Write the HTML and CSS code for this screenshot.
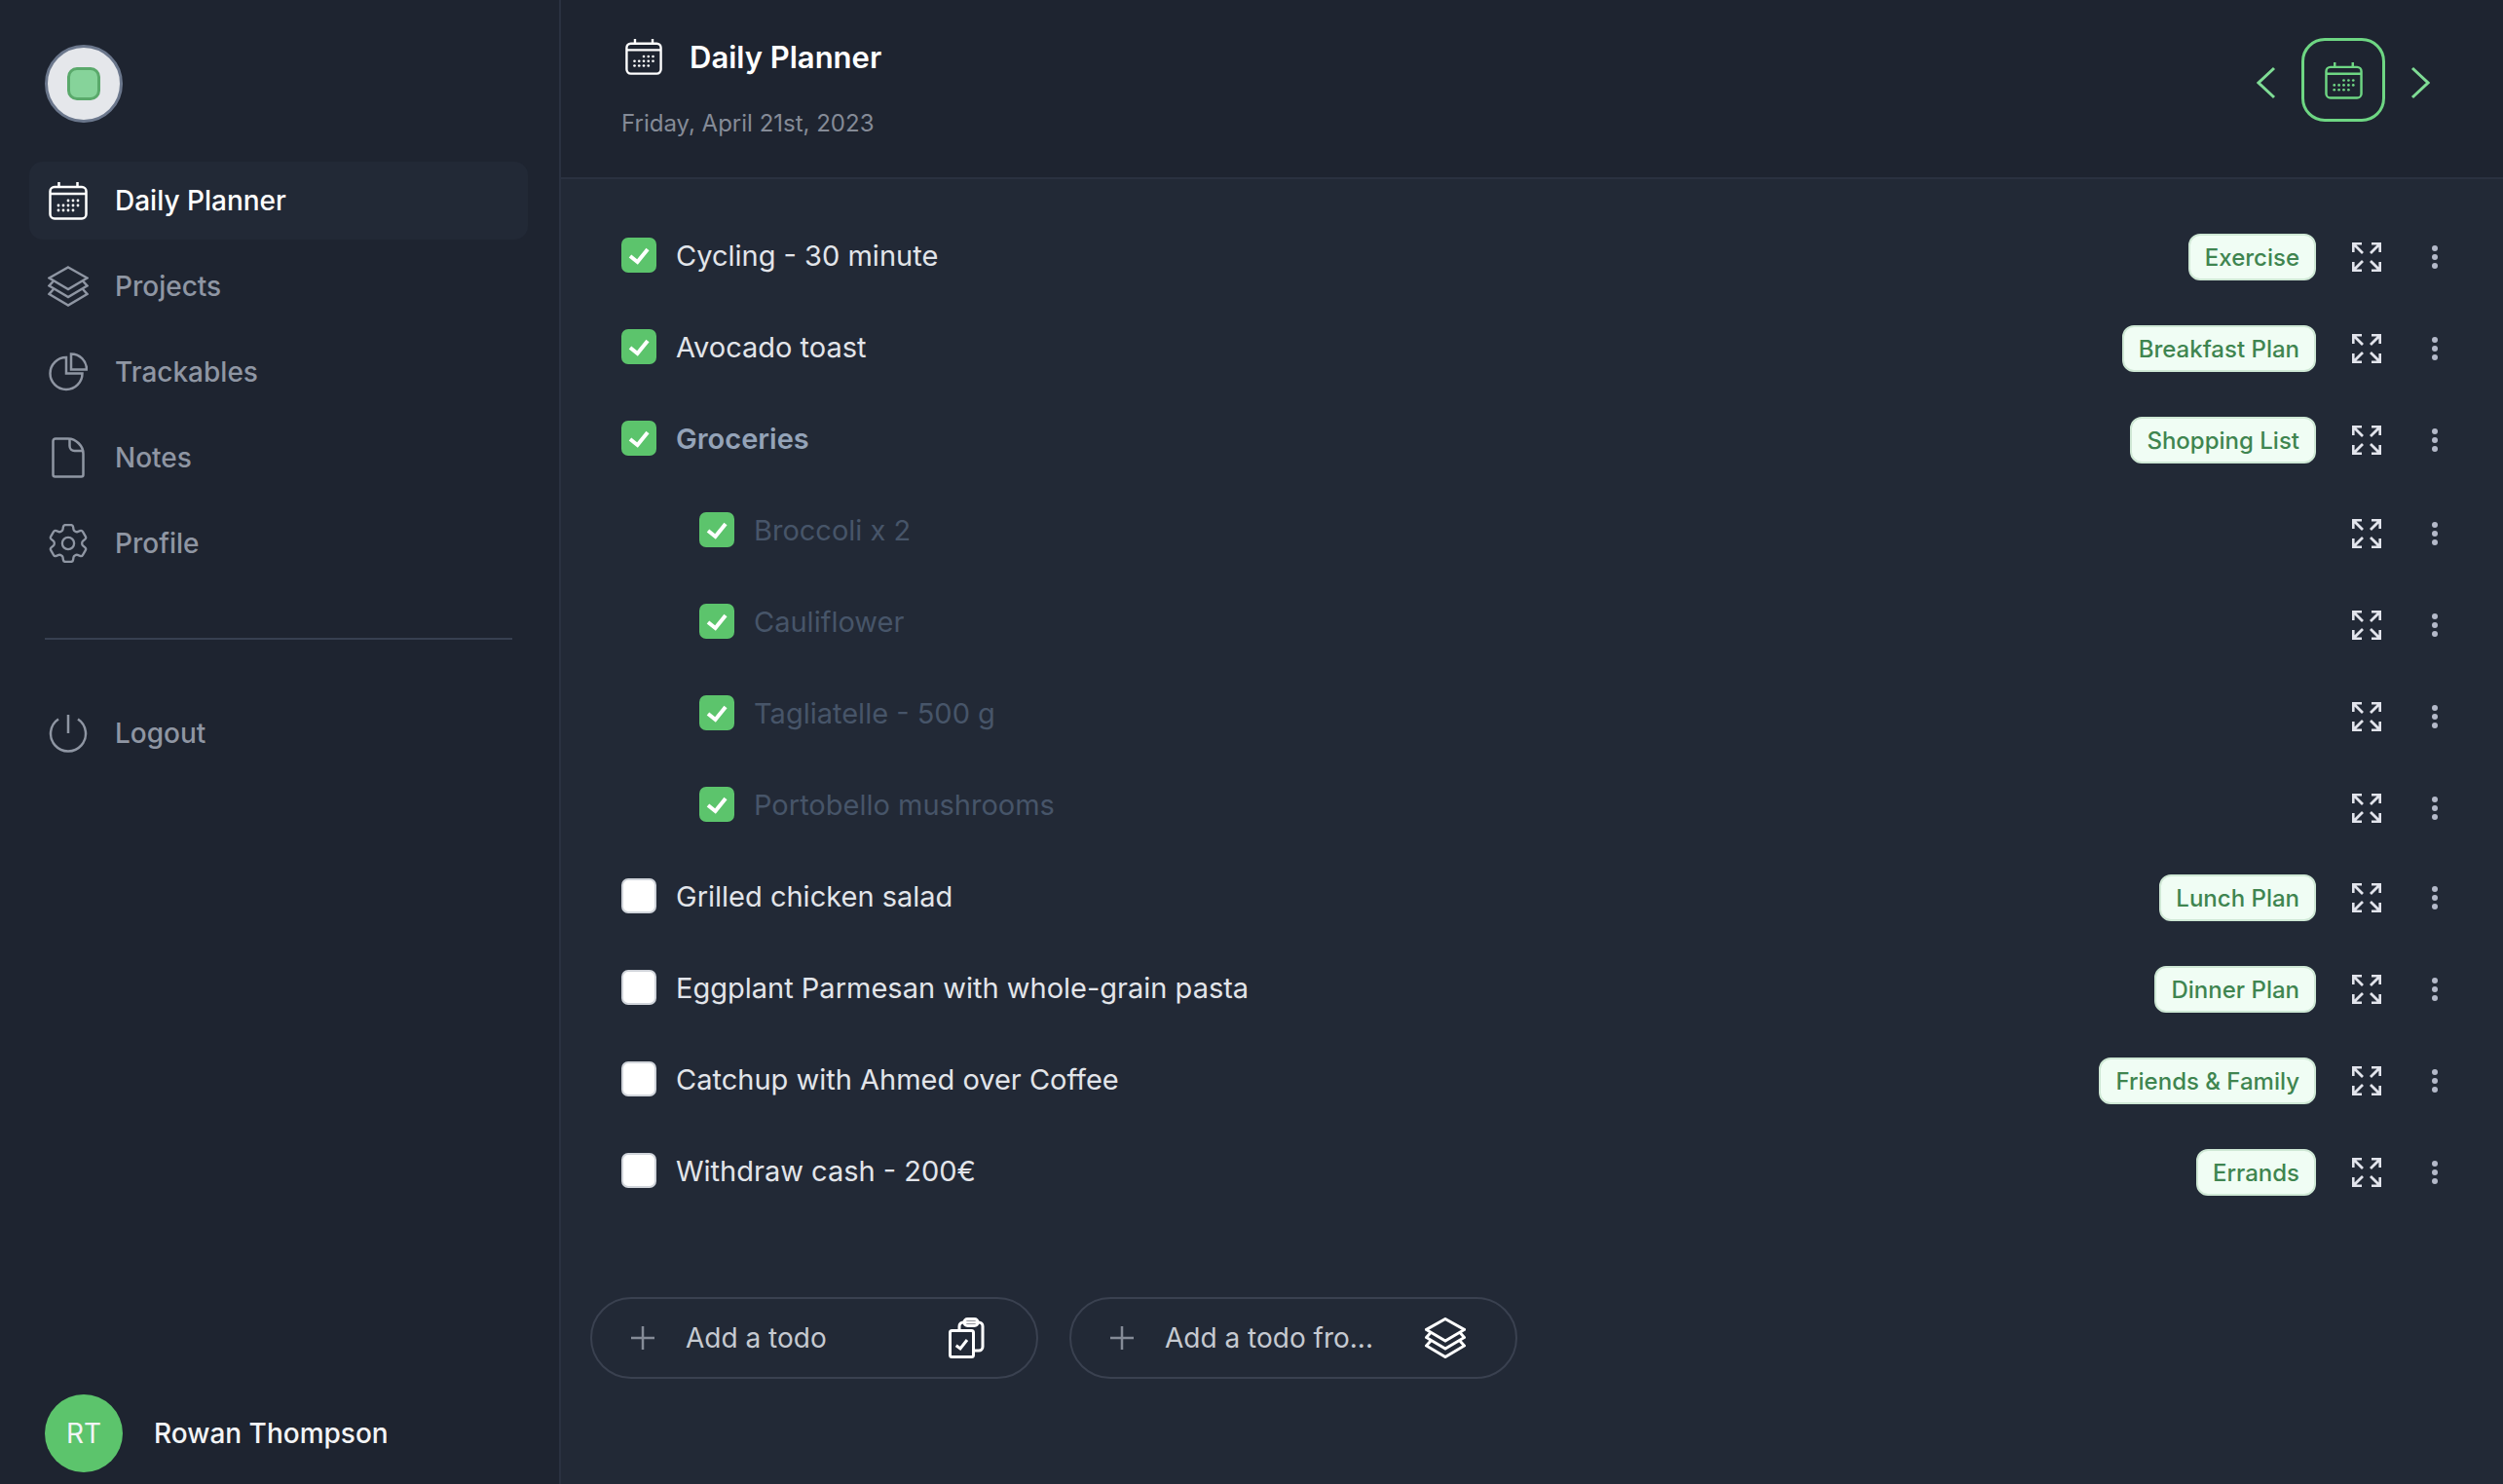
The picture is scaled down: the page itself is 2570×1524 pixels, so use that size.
FILE: index.html
```html
<!DOCTYPE html>
<html lang="en">
<head>
    <meta charset="UTF-8">
    <title>Daily Planner</title>
    <link rel="stylesheet" href="styles.css">
</head>
<body>
    <svg class="sprite" xmlns="http://www.w3.org/2000/svg">
        <symbol id="i-calendar" viewBox="0 0 40 40">
            <rect x="1.5" y="6" width="37" height="32.5" rx="4.5"/>
            <path d="M1.5 13H38.5M10.5 1V6M29.5 1V6"/>
            <g class="dots">
                <circle cx="20" cy="20" r="1.4"/><circle cx="25" cy="20" r="1.4"/><circle cx="30" cy="20" r="1.4"/>
                <circle cx="10" cy="25" r="1.4"/><circle cx="15" cy="25" r="1.4"/><circle cx="20" cy="25" r="1.4"/><circle cx="25" cy="25" r="1.4"/><circle cx="30" cy="25" r="1.4"/>
                <circle cx="10" cy="30" r="1.4"/><circle cx="15" cy="30" r="1.4"/><circle cx="20" cy="30" r="1.4"/><circle cx="25" cy="30" r="1.4"/>
            </g>
        </symbol>
        <symbol id="i-layers" viewBox="0 0 42 42">
            <path d="M21 1.5L40.5 12.5L21 24L1.5 12.5Z"/>
            <path d="M6 15.5L1.5 20.5L21 32L40.5 20.5L36 15.5"/>
            <path d="M6 24L1.5 29L21 40.5L40.5 29L36 24"/>
        </symbol>
        <symbol id="i-pie" viewBox="0 0 40 40">
            <path d="M18 5A16.5 16.5 0 1 0 34.5 21.5H18Z"/>
            <path d="M23 1.5A16 16 0 0 1 39 17.5H23Z"/>
        </symbol>
        <symbol id="i-doc" viewBox="0 0 34 42">
            <path d="M4 1.500H17C25 1.500 32.500 9 32.500 17V38.500A2 2 0 0 1 30.500 40.500H3.500A2 2 0 0 1 1.500 38.500V4A2.500 2.500 0 0 1 4 1.500Z"/>
            <path d="M18.500 2V9A5 5 0 0 0 23.500 14H32"/>
        </symbol>
        <symbol id="i-gear" viewBox="2.500 2.500 19 19">
            <path stroke-width="1.100" d="M9.594 3.94c.09-.542.56-.94 1.11-.94h2.593c.55 0 1.02.398 1.11.94l.213 1.281c.063.374.313.686.645.87.074.04.147.083.22.127.324.196.72.257 1.075.124l1.217-.456a1.125 1.125 0 011.37.49l1.296 2.247a1.125 1.125 0 01-.26 1.431l-1.003.827c-.293.24-.438.613-.431.992a6.759 6.759 0 010 .255c-.007.378.138.75.43.99l1.005.828c.424.35.534.954.26 1.43l-1.298 2.247a1.125 1.125 0 01-1.369.491l-1.217-.456c-.355-.133-.75-.072-1.076.124a6.57 6.57 0 01-.22.128c-.331.183-.581.495-.644.869l-.213 1.28c-.09.543-.56.941-1.11.941h-2.594c-.55 0-1.02-.398-1.11-.94l-.213-1.281c-.062-.374-.312-.686-.644-.87a6.52 6.52 0 01-.22-.127c-.325-.196-.72-.257-1.076-.124l-1.217.456a1.125 1.125 0 01-1.369-.49l-1.297-2.247a1.125 1.125 0 01.26-1.431l1.004-.827c.292-.24.437-.613.43-.992a6.932 6.932 0 010-.255c.007-.378-.138-.75-.43-.99l-1.004-.828a1.125 1.125 0 01-.26-1.43l1.297-2.247a1.125 1.125 0 011.37-.491l1.216.456c.356.133.751.072 1.076-.124.072-.044.146-.087.22-.128.332-.183.582-.495.644-.869l.214-1.281z"/>
            <circle stroke-width="1.100" cx="12" cy="12" r="2.900"/>
        </symbol>
        <symbol id="i-power" viewBox="0 0 40 40">
            <path d="M20 1V20M10 5.500A18 18 0 1 0 30 5.500"/>
        </symbol>
        <symbol id="i-expand" viewBox="0 0 30 30">
            <path d="M1.200 10V1.200H10M1.200 1.200L11 11"/>
            <path d="M20 1.200H28.800V10M28.800 1.200L19 11"/>
            <path d="M1.200 20V28.800H10M1.200 28.800L11 19"/>
            <path d="M20 28.800H28.800V20M28.800 28.800L19 19"/>
        </symbol>
        <symbol id="i-more" viewBox="0 0 6 24">
            <circle cx="3" cy="3" r="3"/><circle cx="3" cy="12" r="3"/><circle cx="3" cy="21" r="3"/>
        </symbol>
        <symbol id="i-check" viewBox="0 0 36 36">
            <path d="M9 19L16.500 25L27 12"/>
        </symbol>
        <symbol id="i-clipboards" viewBox="0 0 42 42">
            <rect x="4.500" y="13.500" width="24" height="27" rx="2"/>
            <path d="M14 13V9A4 4 0 0 1 18 5H34A4 4 0 0 1 38 9V30A4 4 0 0 1 34 34H29"/>
            <rect x="19" y="1.500" width="14" height="7" rx="3.500"/>
            <path d="M10.700 28.700L15 32L22 23"/>
        </symbol>
    </svg>

    <div class="app">
        <aside class="sidebar">
            <div class="logo"><span class="logo-mark"></span></div>

            <nav class="nav">
                <a class="nav-item active"><svg class="nav-icon"><use href="#i-calendar"/></svg>Daily Planner</a>
                <a class="nav-item"><svg class="nav-icon layers"><use href="#i-layers"/></svg>Projects</a>
                <a class="nav-item"><svg class="nav-icon"><use href="#i-pie"/></svg>Trackables</a>
                <a class="nav-item"><svg class="nav-icon doc"><use href="#i-doc"/></svg>Notes</a>
                <a class="nav-item"><svg class="nav-icon"><use href="#i-gear"/></svg>Profile</a>
            </nav>

            <hr class="nav-divider">

            <a class="nav-item"><svg class="nav-icon"><use href="#i-power"/></svg>Logout</a>

            <div class="user">
                <span class="avatar">RT</span>
                <span class="user-name">Rowan Thompson</span>
            </div>
        </aside>

        <main class="main">
            <header class="header">
                <div class="header-text">
                    <h1 class="title"><svg class="title-icon"><use href="#i-calendar"/></svg><span class="title-text">Daily Planner</span></h1>
                    <p class="date">Friday, April 21st, 2023</p>
                </div>
                <div class="date-nav">
                    <svg class="chevron" viewBox="0 0 20 34"><path d="M18 2L2 17L18 32"/></svg>
                    <button class="today"><svg class="today-icon"><use href="#i-calendar"/></svg></button>
                    <svg class="chevron" viewBox="0 0 20 34"><path d="M2 2L18 17L2 32"/></svg>
                </div>
            </header>

            <ul class="todos">
                <li class="todo">
                    <span class="box checked"><svg><use href="#i-check"/></svg></span>
                    <span class="todo-text">Cycling - 30 minute</span>
                    <span class="tag">Exercise</span>
                    <svg class="expand"><use href="#i-expand"/></svg>
                    <svg class="more"><use href="#i-more"/></svg>
                </li>
                <li class="todo">
                    <span class="box checked"><svg><use href="#i-check"/></svg></span>
                    <span class="todo-text">Avocado toast</span>
                    <span class="tag">Breakfast Plan</span>
                    <svg class="expand"><use href="#i-expand"/></svg>
                    <svg class="more"><use href="#i-more"/></svg>
                </li>
                <li class="todo parent">
                    <span class="box checked"><svg><use href="#i-check"/></svg></span>
                    <span class="todo-text">Groceries</span>
                    <span class="tag">Shopping List</span>
                    <svg class="expand"><use href="#i-expand"/></svg>
                    <svg class="more"><use href="#i-more"/></svg>
                </li>
                <li class="todo sub">
                    <span class="box checked"><svg><use href="#i-check"/></svg></span>
                    <span class="todo-text">Broccoli x 2</span>
                    <svg class="expand"><use href="#i-expand"/></svg>
                    <svg class="more"><use href="#i-more"/></svg>
                </li>
                <li class="todo sub">
                    <span class="box checked"><svg><use href="#i-check"/></svg></span>
                    <span class="todo-text">Cauliflower</span>
                    <svg class="expand"><use href="#i-expand"/></svg>
                    <svg class="more"><use href="#i-more"/></svg>
                </li>
                <li class="todo sub">
                    <span class="box checked"><svg><use href="#i-check"/></svg></span>
                    <span class="todo-text">Tagliatelle - 500 g</span>
                    <svg class="expand"><use href="#i-expand"/></svg>
                    <svg class="more"><use href="#i-more"/></svg>
                </li>
                <li class="todo sub">
                    <span class="box checked"><svg><use href="#i-check"/></svg></span>
                    <span class="todo-text">Portobello mushrooms</span>
                    <svg class="expand"><use href="#i-expand"/></svg>
                    <svg class="more"><use href="#i-more"/></svg>
                </li>
                <li class="todo">
                    <span class="box"></span>
                    <span class="todo-text">Grilled chicken salad</span>
                    <span class="tag">Lunch Plan</span>
                    <svg class="expand"><use href="#i-expand"/></svg>
                    <svg class="more"><use href="#i-more"/></svg>
                </li>
                <li class="todo">
                    <span class="box"></span>
                    <span class="todo-text">Eggplant Parmesan with whole-grain pasta</span>
                    <span class="tag">Dinner Plan</span>
                    <svg class="expand"><use href="#i-expand"/></svg>
                    <svg class="more"><use href="#i-more"/></svg>
                </li>
                <li class="todo">
                    <span class="box"></span>
                    <span class="todo-text">Catchup with Ahmed over Coffee</span>
                    <span class="tag">Friends &amp; Family</span>
                    <svg class="expand"><use href="#i-expand"/></svg>
                    <svg class="more"><use href="#i-more"/></svg>
                </li>
                <li class="todo">
                    <span class="box"></span>
                    <span class="todo-text">Withdraw cash - 200€</span>
                    <span class="tag">Errands</span>
                    <svg class="expand"><use href="#i-expand"/></svg>
                    <svg class="more"><use href="#i-more"/></svg>
                </li>
            </ul>

            <div class="add-row">
                <button class="add-btn">
                    <svg class="plus" viewBox="0 0 24 24"><path d="M12 0V24M0 12H24"/></svg>
                    <span class="add-label">Add a todo</span>
                    <svg class="add-icon"><use href="#i-clipboards"/></svg>
                </button>
                <button class="add-btn">
                    <svg class="plus" viewBox="0 0 24 24"><path d="M12 0V24M0 12H24"/></svg>
                    <span class="add-label">Add a todo fro...</span>
                    <svg class="add-icon"><use href="#i-layers"/></svg>
                </button>
            </div>
        </main>
    </div>
</body>
</html>
```

FILE: styles.css
```css
* { box-sizing: border-box; }

html, body {
    margin: 0;
    height: 100%;
}

body {
    font-family: Inter, "Liberation Sans", sans-serif;
    background: #222936;
    color: #e5e7eb;
}

.sprite { display: none; }

svg {
    fill: none;
    stroke: currentColor;
    stroke-width: 2.5;
    flex: none;
}

.dots {
    fill: currentColor;
    stroke: none;
}

.app {
    display: flex;
    height: 1524px;
}

/* sidebar */
.sidebar {
    width: 576px;
    flex: none;
    display: flex;
    flex-direction: column;
    padding: 46px 32px 12px 30px;
    background: #1e2430;
    border-right: 2px solid #2a3140;
}

.logo {
    width: 80px;
    height: 80px;
    margin-left: 16px;
    margin-bottom: 40px;
    display: flex;
    align-items: center;
    justify-content: center;
    border-radius: 50%;
    background: #e5e7eb;
    border: 3px solid #6b778c;
}

.logo-mark {
    width: 34px;
    height: 34px;
    border-radius: 10px;
    background: #86d39a;
    border: 3px solid #5aa96b;
}

.nav {
    display: flex;
    flex-direction: column;
    gap: 8px;
}

.nav-item {
    height: 80px;
    display: flex;
    align-items: center;
    gap: 28px;
    padding-left: 20px;
    border-radius: 14px;
    color: #8f96a3;
    font-size: 28px;
    font-weight: 500;
}

.nav-item.active {
    background: #222936;
    color: #fff;
}

.nav-icon {
    width: 40px;
    height: 40px;
}

.nav-icon.layers {
    width: 42px;
    height: 42px;
    margin: 0 -1px;
}

.nav-icon.doc {
    width: 34px;
    height: 42px;
    margin: 0 3px;
}

.nav-divider {
    width: 480px;
    height: 2px;
    margin: 57px 0 56px 16px;
    border: 0;
    background: #374050;
}

.user {
    margin-top: auto;
    margin-left: 16px;
    display: flex;
    align-items: center;
    gap: 32px;
}

.avatar {
    width: 80px;
    height: 80px;
    display: flex;
    align-items: center;
    justify-content: center;
    border-radius: 50%;
    background: #5cc46c;
    color: #f3f4f6;
    font-size: 28px;
}

.user-name {
    color: #f3f4f6;
    font-size: 28px;
    font-weight: 500;
}

/* main column */
.main {
    flex: 1;
    min-width: 0;
    display: flex;
    flex-direction: column;
}

.header {
    height: 184px;
    flex: none;
    display: flex;
    justify-content: space-between;
    padding: 39px 75px 0 62px;
    background: #1e2430;
    border-bottom: 2px solid #2a3140;
}

.title {
    margin: 0;
    display: flex;
    align-items: center;
    gap: 28px;
    height: 38px;
    padding-left: 4px;
    color: #fff;
    font-size: 31px;
    font-weight: 600;
    line-height: 35px;
}

.title-text { padding-top: 1px; }

.title-icon {
    width: 38px;
    height: 38px;
}

.date {
    margin: 34px 0 0;
    color: #858b97;
    font-size: 24px;
    line-height: 32px;
}

.date-nav {
    display: flex;
    align-items: center;
    align-self: flex-start;
    gap: 26px;
    color: #7fdc95;
}

.chevron {
    width: 20px;
    height: 34px;
    margin-top: 6px;
    stroke-width: 3;
}

.today {
    width: 86px;
    height: 86px;
    padding: 0;
    display: flex;
    align-items: center;
    justify-content: center;
    background: none;
    border: 3px solid #6ed683;
    border-radius: 24px;
    color: #6ed683;
}

.today-icon {
    width: 39px;
    height: 39px;
}

/* todo list */
.todos {
    list-style: none;
    margin: 31px 0 0;
    padding: 0 67px 0 62px;
}

.todo {
    height: 94px;
    display: flex;
    align-items: center;
    font-size: 29px;
}

.todo.sub { padding-left: 80px; }

.box {
    width: 36px;
    height: 36px;
    flex: none;
    margin-right: 20px;
    border-radius: 7px;
    background: #fff;
    border: 2px solid #d1d5db;
}

.box.checked {
    background: #5cc46c;
    border: 0;
    color: #fff;
}

.box svg {
    display: block;
    width: 36px;
    height: 36px;
    stroke-width: 4;
}

.todo-text {
    flex: 1;
    color: #e2e5ea;
}

.parent .todo-text {
    color: #94a3b8;
    font-weight: 600;
}

.sub .todo-text { color: #475569; }

.tag {
    height: 48px;
    display: flex;
    align-items: center;
    margin-top: 4px;
    padding: 0 15px;
    background: #f0fdf4;
    border: 2px solid #cfe8d5;
    border-radius: 12px;
    color: #3f8550;
    font-size: 24px;
    font-weight: 500;
}

.expand {
    width: 30px;
    height: 30px;
    margin: 4px 52px 0 37px;
    color: #e2e4ec;
    stroke-width: 2.800;
}

.sub .expand { margin-top: 7px; }

.more {
    width: 6px;
    height: 24px;
    margin-top: 4px;
    fill: #b4b9c9;
    stroke: none;
}

.sub .more { margin-top: 7px; }

/* add buttons */
.add-row {
    display: flex;
    gap: 32px;
    margin: 83px 0 0 30px;
}

.add-btn {
    width: 460px;
    height: 84px;
    display: flex;
    align-items: center;
    padding: 0 51px 0 40px;
    background: none;
    border: 2px solid #3a4150;
    border-radius: 42px;
    font-family: inherit;
    color: #c6cad1;
    font-size: 28px;
    text-align: left;
}

.plus {
    width: 24px;
    height: 24px;
    margin-right: 32px;
    color: #858b97;
}

.add-label { flex: 1; }

.add-icon {
    width: 42px;
    height: 42px;
    color: #fff;
    stroke-width: 3;
}
```
